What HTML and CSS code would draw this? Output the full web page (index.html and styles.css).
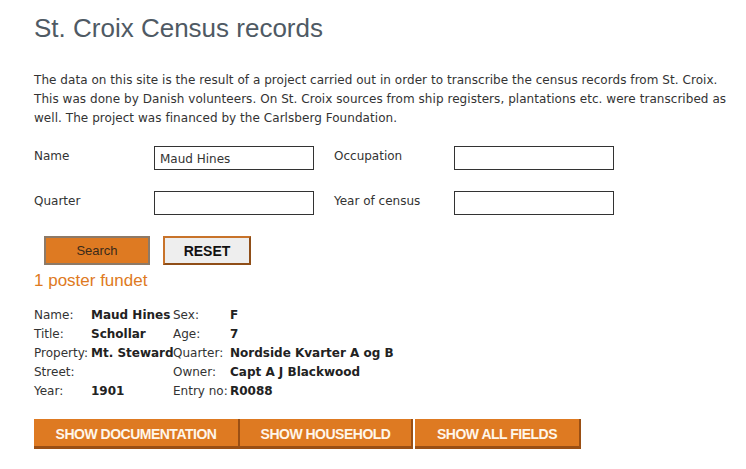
FILE: index.html
```html
<!DOCTYPE html>
<html lang="en">
<head>
<meta charset="utf-8">
<title>St. Croix Census records</title>
<link rel="stylesheet" href="styles.css">
</head>
<body>
<div class="page">
  <h1 class="title">St. Croix Census records</h1>
  <p class="intro">The data on this site is the result of a project carried out in order to transcribe the census records from St. Croix. This was done by Danish volunteers. On St. Croix sources from ship registers, plantations etc. were transcribed as well. The project was financed by the Carlsberg Foundation.</p>

  <form class="search">
    <div class="grid">
      <label class="lbl">Name</label>
      <input class="field" type="text" value="Maud Hines">
      <label class="lbl lbl-right">Occupation</label>
      <input class="field" type="text">
      <label class="lbl">Quarter</label>
      <input class="field" type="text">
      <label class="lbl lbl-right">Year of census</label>
      <input class="field" type="text">
    </div>
    <div class="actions">
      <button type="button" class="btn-search">Search</button>
      <button type="button" class="btn-reset">RESET</button>
    </div>
  </form>

  <div class="count">1 poster fundet</div>

  <div class="record">
    <span class="k">Name:</span><span class="v">Maud Hines</span><span class="k">Sex:</span><span class="v">F</span>
    <span class="k">Title:</span><span class="v">Schollar</span><span class="k">Age:</span><span class="v">7</span>
    <span class="k">Property:</span><span class="v">Mt. Steward</span><span class="k">Quarter:</span><span class="v">Nordside Kvarter A og B</span>
    <span class="k">Street:</span><span class="v"></span><span class="k">Owner:</span><span class="v">Capt A J Blackwood</span>
    <span class="k">Year:</span><span class="v">1901</span><span class="k">Entry no:</span><span class="v">R0088</span>
  </div>

  <div class="tabs">
    <button type="button" class="tab tab-doc">SHOW DOCUMENTATION</button>
    <button type="button" class="tab tab-house">SHOW HOUSEHOLD</button>
    <button type="button" class="tab tab-all">SHOW ALL FIELDS</button>
  </div>
</div>
</body>
</html>
```

FILE: styles.css
```css
html, body {
  margin: 0;
  padding: 0;
  background: #ffffff;
}
body {
  font-family: "DejaVu Sans", Verdana, sans-serif;
  font-size: 12px;
  color: #333333;
}
.page {
  padding: 12px 0 0 34px;
}
.title {
  margin: 0;
  font-family: "Liberation Sans", Arial, sans-serif;
  font-weight: normal;
  font-size: 26px;
  line-height: 32px;
  color: #4f5a64;
}
.intro {
  margin: 27px 0 0 0;
  width: 700px;
  line-height: 19px;
  letter-spacing: 0.05px;
}
.search {
  margin-top: 18px;
}
.grid {
  display: grid;
  grid-template-columns: 120px 160px 140px 160px;
  row-gap: 21px;
}
.lbl-right {
  padding-left: 20px;
}
.lbl {
  line-height: 16px;
  padding-top: 2px;
}
.field {
  box-sizing: border-box;
  width: 160px;
  height: 24px;
  margin: 0;
  border: 1px solid #333;
  padding: 2px 5px 0 5px;
  font-family: inherit;
  font-size: 12px;
  color: #333;
  background: #fff;
}
.actions {
  display: flex;
  gap: 13px;
  margin: 21px 0 0 10px;
}
.btn-search {
  box-sizing: border-box;
  width: 106px;
  height: 29px;
  background: #de7a22;
  border: 2px solid #8c7a68;
  font-family: "Liberation Sans", Arial, sans-serif;
  font-size: 13px;
  color: #3a2a1a;
  padding: 0;
}
.btn-reset {
  box-sizing: border-box;
  width: 88px;
  height: 29px;
  background: #eeeeee;
  border: 2px solid #c8732a;
  border-right-color: #8f4e18;
  border-bottom-color: #8f4e18;
  font-family: "Liberation Sans", Arial, sans-serif;
  font-weight: bold;
  font-size: 14px;
  color: #111;
  padding: 0;
}
.count {
  margin-top: 6px;
  font-family: "Liberation Sans", Arial, sans-serif;
  font-size: 17px;
  line-height: 20px;
  color: #de7a22;
}
.record {
  display: grid;
  grid-template-columns: 57px 82px 57px auto;
  justify-content: start;
  margin-top: 15px;
  line-height: 19px;
  white-space: nowrap;
}
.k {
  color: #333;
}
.v {
  font-weight: bold;
  color: #222;
}
.tabs {
  display: flex;
  margin-top: 18px;
}
.tab {
  box-sizing: border-box;
  height: 30px;
  margin: 0;
  padding: 2px 0 0 0;
  background: #de7a22;
  border: none;
  border-right: 2px solid #9a4f14;
  border-bottom: 3px solid #9a4f14;
  font-family: "Liberation Sans", Arial, sans-serif;
  font-weight: bold;
  font-size: 14px;
  letter-spacing: -0.5px;
  color: #fff6ea;
}
.tab-doc { width: 206px; }
.tab-house { width: 173px; }
.tab-all { width: 166px; margin-left: 2px; }
```
